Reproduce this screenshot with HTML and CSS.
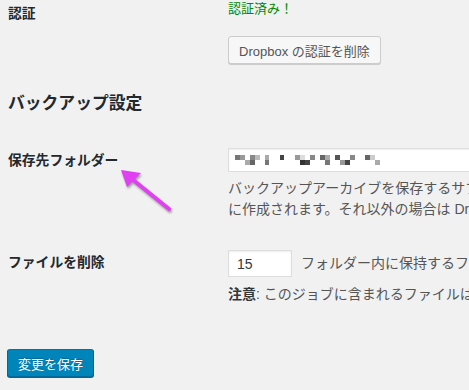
FILE: index.html
```html
<!DOCTYPE html>
<html lang="ja">
<head>
    <meta charset="UTF-8">
    <meta name="viewport" content="width=device-width, initial-scale=1.0">
    <title>Dropbox 設定</title>
    <link rel="stylesheet" href="styles.css">
</head>
<body>
    <div class="wrap">
        <div class="row row-auth">
            <div class="label">認証</div>
            <div class="field">
                <div class="ok">認証済み！</div>
                <button class="button" type="button">Dropbox の認証を削除</button>
            </div>
        </div>

        <h2>バックアップ設定</h2>

        <div class="row row-dest">
            <div class="label">保存先フォルダー</div>
            <div class="field">
                <div class="text-input">
                    <svg class="mosaic" width="160" height="14" viewBox="0 0 160 14">
                        <rect x="0" y="2" width="5" height="5" fill="#777"/>
                        <rect x="5" y="2" width="5" height="5" fill="#999"/>
                        <rect x="10" y="7" width="5" height="5" fill="#aaa"/>
                        <rect x="15" y="2" width="5" height="5" fill="#888"/>
                        <rect x="15" y="7" width="5" height="5" fill="#666"/>
                        <rect x="20" y="2" width="5" height="5" fill="#bbb"/>
                        <rect x="30" y="2" width="4" height="5" fill="#aaa"/>
                        <rect x="30" y="7" width="4" height="5" fill="#777"/>
                        <rect x="45" y="2" width="4" height="5" fill="#444"/>
                        <rect x="60" y="2" width="5" height="5" fill="#999"/>
                        <rect x="65" y="2" width="5" height="5" fill="#ddd"/>
                        <rect x="65" y="7" width="5" height="5" fill="#333"/>
                        <rect x="70" y="7" width="5" height="5" fill="#444"/>
                        <rect x="75" y="2" width="5" height="5" fill="#888"/>
                        <rect x="85" y="2" width="5" height="5" fill="#666"/>
                        <rect x="90" y="2" width="5" height="5" fill="#aaa"/>
                        <rect x="90" y="7" width="5" height="5" fill="#777"/>
                        <rect x="100" y="2" width="5" height="5" fill="#555"/>
                        <rect x="105" y="7" width="5" height="5" fill="#999"/>
                        <rect x="110" y="7" width="5" height="5" fill="#444"/>
                        <rect x="115" y="2" width="5" height="5" fill="#888"/>
                        <rect x="130" y="2" width="5" height="5" fill="#666"/>
                        <rect x="135" y="2" width="5" height="5" fill="#ccc"/>
                        <rect x="140" y="7" width="5" height="5" fill="#aaa"/>
                    </svg>
                </div>
                <p class="description">バックアップアーカイブを保存するサブフォルダーを指定します。フォルダーがない場合は自動的<br>に作成されます。それ以外の場合は Dropbox のルートに保存されます。</p>
            </div>
        </div>

        <div class="row row-files">
            <div class="label">ファイルを削除</div>
            <div class="field">
                <div class="inline">
                    <input class="small-text" type="text" value="15">
                    <span class="description">フォルダー内に保持するファイルの最大数です。</span>
                </div>
                <p class="description note"><strong>注意</strong>: このジョブに含まれるファイルは削除されます。</p>
            </div>
        </div>

        <button class="button button-primary" type="button">変更を保存</button>
    </div>

    <svg class="arrow" width="70" height="60" viewBox="0 0 70 60">
        <line x1="57" y1="48" x2="20" y2="18" stroke="#e03ff2" stroke-width="4" stroke-linecap="round"/>
        <polygon points="9,9 29,12 15,26" fill="#e03ff2"/>
    </svg>
</body>
</html>
```

FILE: styles.css
```css
body {
    margin: 0;
    background: #f1f1f1;
    color: #23282d;
    font-family: "Liberation Sans", "Noto Sans CJK JP", sans-serif;
    font-size: 14px;
    overflow: hidden;
    position: relative;
    height: 390px;
}
.wrap {
    padding-left: 8px;
    width: 760px;
}
.row {
    display: grid;
    grid-template-columns: 220px 1fr;
}
.label {
    font-weight: bold;
    font-size: 13.8px;
    line-height: 18px;
}
.row-auth .label {
    padding-top: 5px;
}
.ok {
    color: #008a00;
    font-size: 13px;
    line-height: 18px;
}
.button {
    display: inline-block;
    height: 28px;
    margin-top: 18px;
    padding: 0 10px;
    font-family: inherit;
    font-size: 13px;
    color: #555;
    background: #f7f7f7;
    border: 1px solid #ccc;
    border-radius: 3px;
    box-shadow: 0 1px 0 #ccc;
    cursor: pointer;
}
h2 {
    margin: 30px 0 0;
    font-size: 16.8px;
    line-height: 20px;
}
.row-dest {
    margin-top: 34px;
}
.row-dest .label {
    padding-top: 4px;
}
.text-input {
    box-sizing: border-box;
    width: 360px;
    height: 24px;
    background: #fff;
    border: 1px solid #ddd;
    box-shadow: inset 0 1px 2px rgba(0, 0, 0, 0.07);
    padding: 4px 0 0 6px;
}
.mosaic {
    display: block;
}
.description {
    margin: 0;
    color: #555;
    font-size: 14px;
    line-height: 21px;
    white-space: nowrap;
}
.row-dest .description {
    margin-top: 6px;
}
.row-files {
    margin-top: 30px;
}
.row-files .label {
    padding-top: 4px;
}
.inline {
    display: flex;
    align-items: center;
    gap: 9px;
}
.small-text {
    box-sizing: border-box;
    width: 64px;
    height: 27px;
    margin: 0;
    padding: 0 8px;
    font-family: inherit;
    font-size: 14px;
    color: #32373c;
    background: #fff;
    border: 1px solid #ddd;
    box-shadow: inset 0 1px 2px rgba(0, 0, 0, 0.07);
}
.note {
    margin-top: 7px;
}
.note strong {
    color: #32373c;
}
.button-primary {
    margin: 44px 0 0 -1px;
    padding: 0 10px;
    color: #fff;
    background: #0085ba;
    border-color: #0073aa #006799 #006799;
    box-shadow: 0 1px 0 #006799;
    text-shadow: 0 -1px 1px #006799;
}
.arrow {
    position: absolute;
    left: 112px;
    top: 161px;
    filter: drop-shadow(1px 2px 1px rgba(0, 0, 0, 0.35));
}
```
